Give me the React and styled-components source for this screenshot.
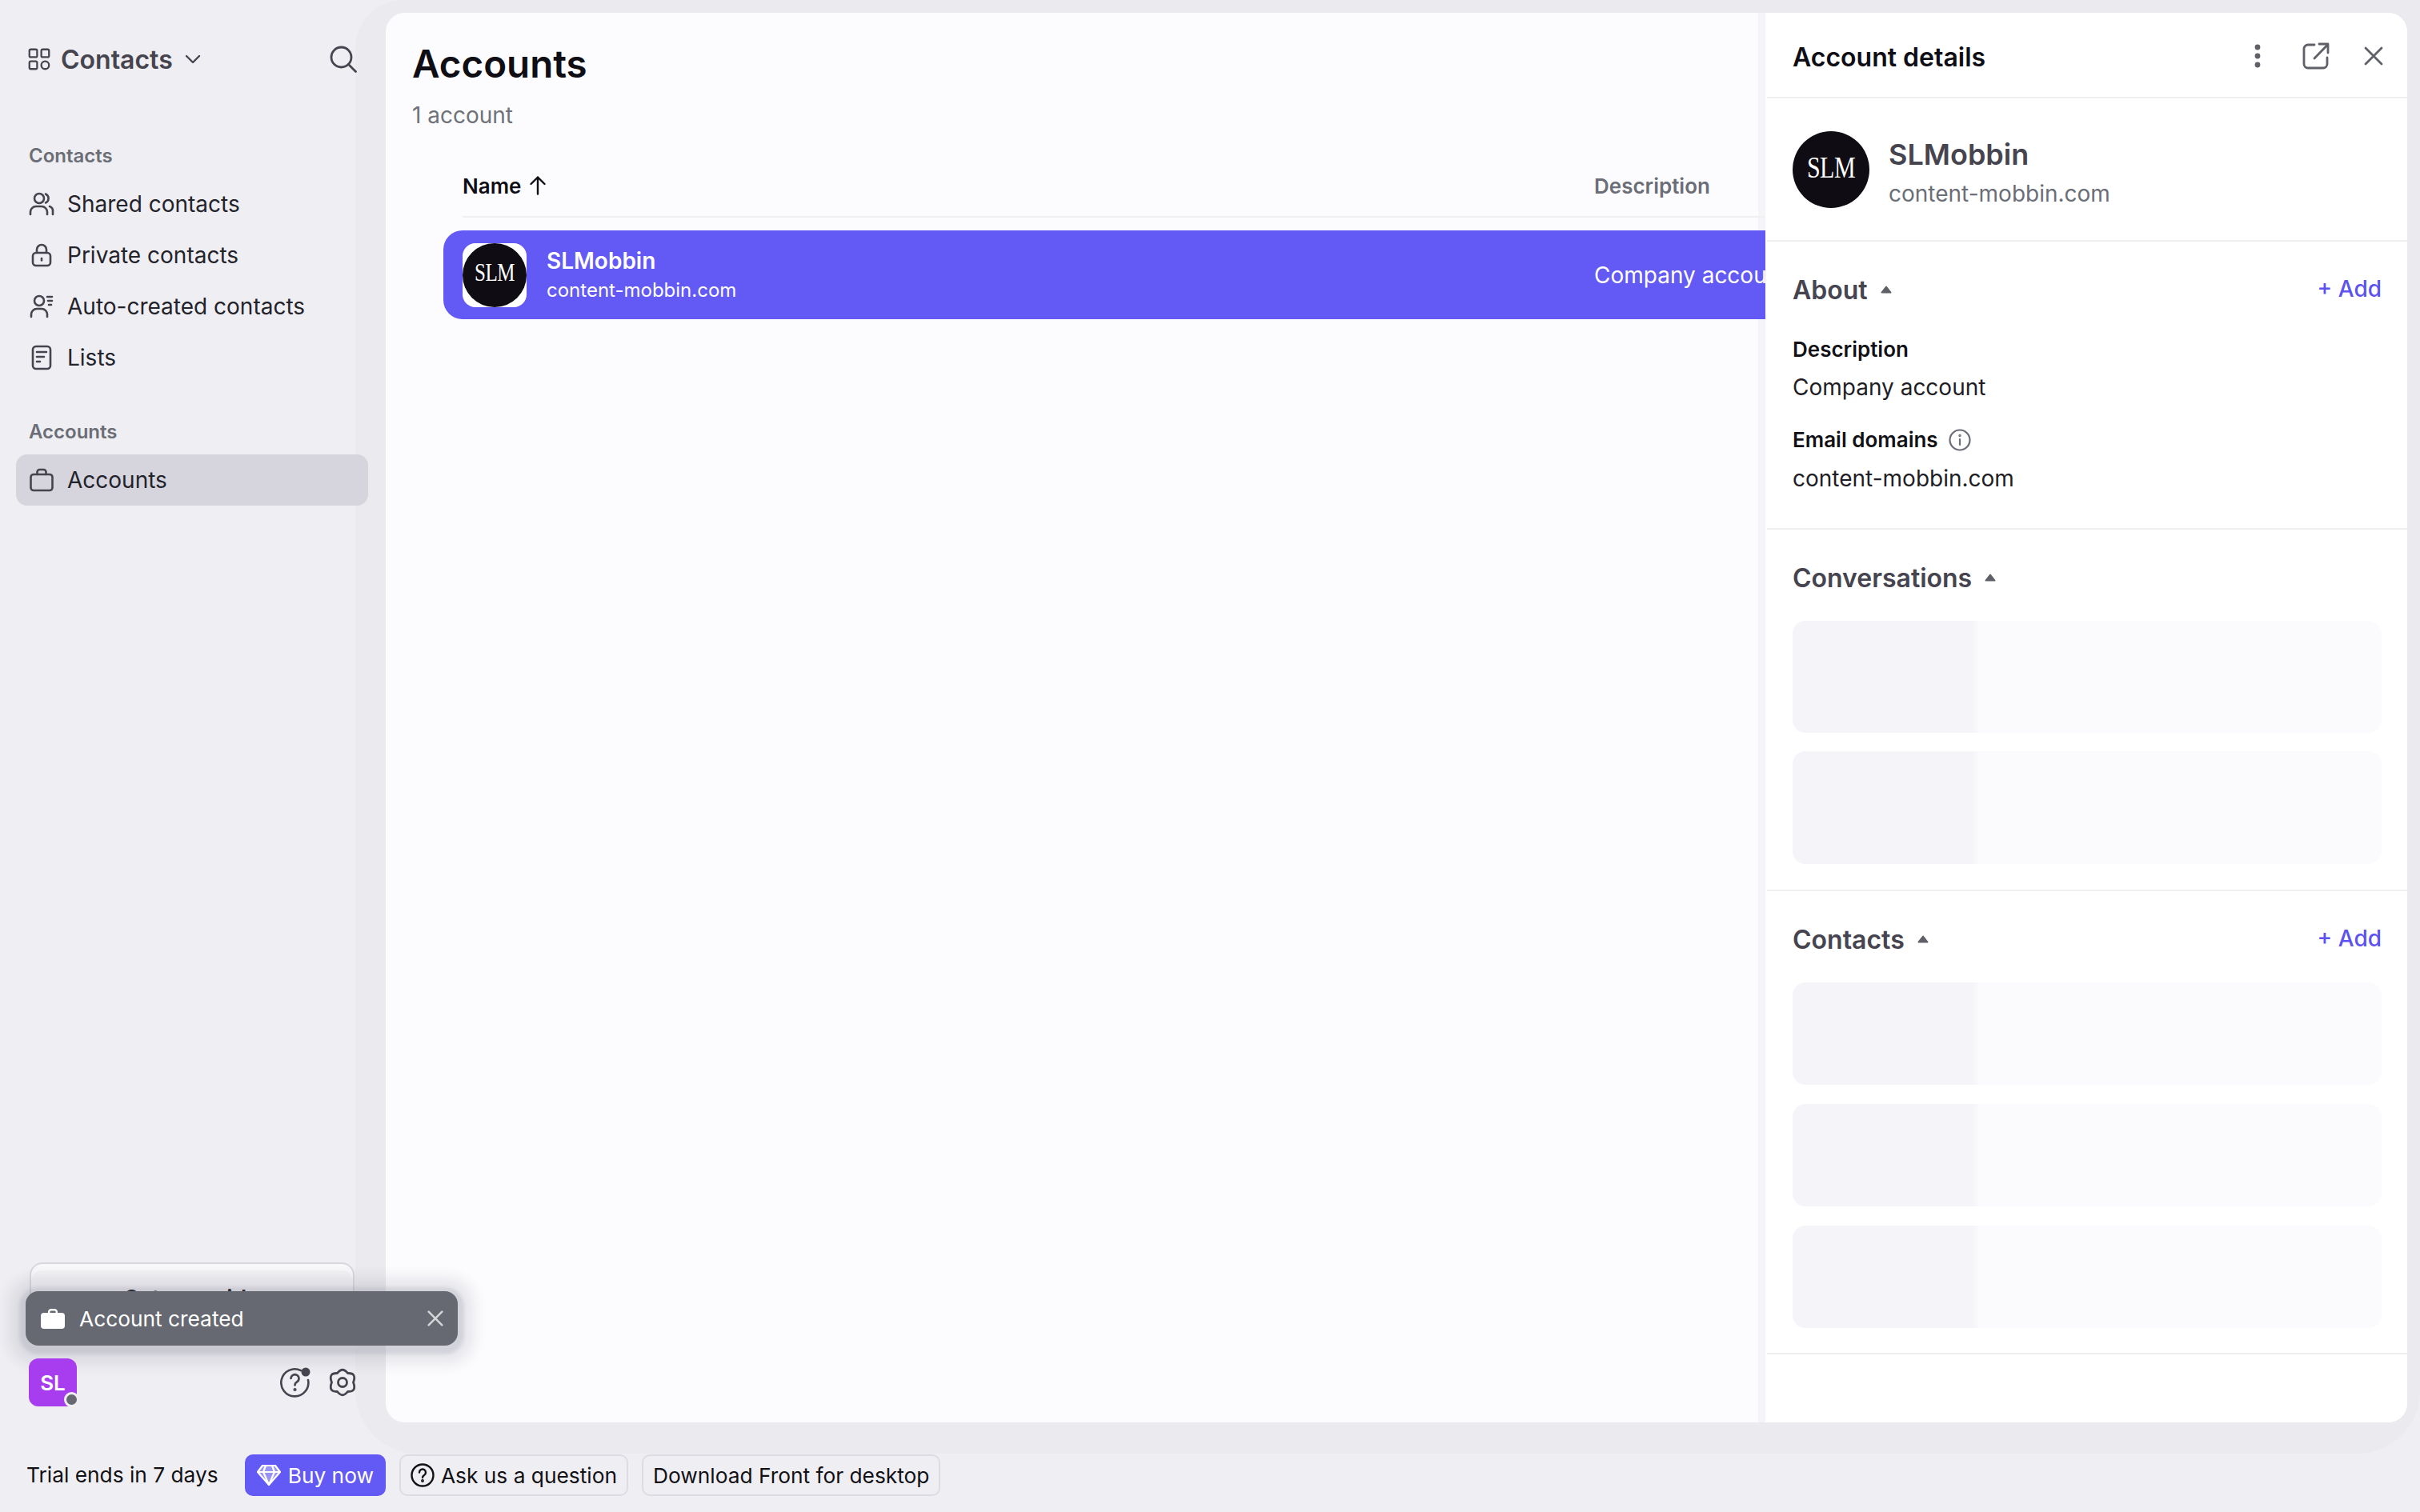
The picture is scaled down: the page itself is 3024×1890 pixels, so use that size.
import React from "react";
import styled, { createGlobalStyle } from "styled-components";

const Global = createGlobalStyle`
  html, body { margin: 0; padding: 0; background: #EFEEF2; }
  * { box-sizing: border-box; }
  body { font-family: "Inter", "Liberation Sans", sans-serif; color: #1F1E26; }
`;

const Page = styled.div`
  position: relative;
  width: 3024px;
  height: 1890px;
  overflow: hidden;
  display: flex;
  flex-direction: column;
  background: #EFEEF2;
`;
const Top = styled.div`
  display: flex;
  height: 1817px;
  flex: none;
`;
const Sidebar = styled.aside`
  position: relative;
  z-index: 2;
  width: 444px;
  flex: none;
  display: flex;
  flex-direction: column;
  padding: 50px 0 59px 0;
`;
const SideHead = styled.div`
  display: flex;
  align-items: center;
  height: 48px;
  padding-left: 35px;
  width: 446px;
  color: #45444F;
`;
const SideTitle = styled.span`
  font-size: 32px;
  font-weight: 600;
  margin-left: 13px;
  margin-right: 15px;
  color: #45444F;
`;
const SearchWrap = styled.span`
  margin-left: auto;
  display: flex;
`;
const GroupLabel = styled.div`
  font-size: 24px;
  font-weight: 600;
  line-height: 32px;
  color: #6B6E76;
  padding-left: 36px;
  margin-top: ${(p) => p.$top}px;
  margin-bottom: 12px;
`;
const NavItem = styled.div`
  width: 440px;
  height: 64px;
  margin-left: 20px;
  padding-left: 16px;
  display: flex;
  align-items: center;
  gap: 16px;
  font-size: 28px;
  color: #23232B;
  border-radius: 14px;
  flex: none;
  background: ${(p) => (p.$active ? "#D6D5DD" : "transparent")};
  svg { flex: none; color: #45444F; }
`;
const SetupCard = styled.div`
  margin-top: auto;
  margin-left: 37px;
  width: 406px;
  height: 84px;
  margin-bottom: 36px;
  border: 2px solid #D8D7DD;
  border-radius: 16px;
  background: #F2F1F4;
  box-shadow: inset 0 8px 0 #F8F8FA;
  font-size: 28px;
  font-weight: 600;
  text-align: center;
  padding-top: 26px;
  color: #111116;
`;
const BottomBar = styled.div`
  position: relative;
  z-index: 6;
  display: flex;
  align-items: center;
  height: 60px;
  margin-left: 36px;
  width: 410px;
`;
const UserTile = styled.div`
  position: relative;
  width: 60px;
  height: 60px;
  border-radius: 12px;
  background: #A83DF0;
  color: #fff;
  font-size: 26px;
  font-weight: 600;
  display: flex;
  align-items: center;
  justify-content: center;
`;
const StatusDot = styled.span`
  position: absolute;
  right: -3px;
  bottom: -1px;
  width: 19px;
  height: 19px;
  border-radius: 50%;
  border: 3px solid #EFEEF2;
  background: #666971;
`;
const BarIcons = styled.div`
  margin-left: auto;
  display: flex;
  align-items: center;
  gap: 22px;
  color: #45444F;
`;

const Shell = styled.div`
  flex: 1;
  min-width: 0;
  background: #EBEAEE;
  border-radius: 60px 0 78px 78px;
  padding: 16px 16px 39px 38px;
  display: flex;
`;
const Card = styled.div`
  flex: 1;
  display: flex;
  border-radius: 24px;
  overflow: hidden;
  background: #FCFCFE;
`;
const ListPane = styled.main`
  position: relative;
  z-index: 1;
  width: 1724px;
  flex: none;
  overflow: hidden;
  padding-top: 33px;
`;
const PageTitle = styled.h1`
  margin: 0 0 0 33px;
  font-size: 47.5px;
  line-height: 62px;
  font-weight: 600;
  color: #0F0E14;
`;
const Count = styled.div`
  margin: 15px 0 0 33px;
  font-size: 28px;
  line-height: 36px;
  color: #6F7279;
`;
const HeadRow = styled.div`
  margin: 32px 0 0 96px;
  height: 78px;
  border-bottom: 2px solid #F0F0F2;
  display: flex;
  align-items: center;
`;
const HeadCell = styled.div`
  width: ${(p) => p.$w}px;
  display: flex;
  align-items: center;
  gap: 11px;
  font-size: 26px;
  font-weight: 600;
  color: ${(p) => p.$color};
`;
const SelectedRow = styled.div`
  margin: 16px -240px 0 72px;
  height: 111px;
  border-radius: 24px;
  padding-left: 24px;
  background: #6359F5;
  color: #fff;
  display: flex;
  align-items: center;
`;
const NameCell = styled.div`
  width: 1414px;
  display: flex;
  align-items: center;
  gap: 25px;
`;
const LogoTile = styled.div`
  width: 80px;
  height: 80px;
  border-radius: 16px;
  background: #fff;
`;
const LogoCircle = styled.div`
  width: ${(p) => p.$size}px;
  height: ${(p) => p.$size}px;
  border-radius: 50%;
  background: #0F0D13;
  display: flex;
  align-items: center;
  justify-content: center;
  flex: none;
`;
const LogoMark = styled.span`
  font-family: "Liberation Serif", serif;
  color: #fff;
  font-size: ${(p) => p.$font}px;
  line-height: 1;
  letter-spacing: -0.5px;
  margin-bottom: 6px;
  transform: scaleY(1.25);
`;
const RowName = styled.div`
  font-size: 28px;
  font-weight: 600;
  line-height: 36px;
`;
const RowSub = styled.div`
  font-size: 24px;
  line-height: 34px;
  margin-top: 2px;
`;
const RowDesc = styled.div`
  font-size: 28px;
  white-space: nowrap;
`;

const Details = styled.aside`
  position: relative;
  flex: 1;
  background: #fff;
  box-shadow: -9px 0 0 #F5F5F9;
`;
const DetailHead = styled.div`
  height: 107px;
  margin-left: 2px;
  padding: 0 30px 0 32px;
  border-bottom: 2px solid #EFEFF2;
  display: flex;
  align-items: center;
`;
const DetailTitle = styled.div`
  font-size: 32px;
  font-weight: 600;
  color: #0F0E14;
  margin-top: 5px;
`;
const HeadIcons = styled.div`
  margin-left: auto;
  display: flex;
  align-items: center;
  color: #5F6068;
  gap: 43px;
  margin-top: 2px;
`;
const DotsWrap = styled.span`
  display: flex;
  margin-right: 7px;
`;
const Section = styled.section`
  margin-left: 2px;
  padding: ${(p) => p.$top}px 32px ${(p) => p.$bottom}px 32px;
  border-bottom: 2px solid #EFEFF2;
`;
const Profile = styled(Section)`
  display: flex;
  align-items: flex-start;
  gap: 24px;
`;
const ProfileText = styled.div`
  margin-top: 6px;
`;
const ProfileName = styled.div`
  font-size: 36px;
  font-weight: 600;
  line-height: 46px;
  color: #45444F;
`;
const ProfileSub = styled.div`
  font-size: 28px;
  line-height: 36px;
  margin-top: 8px;
  color: #6B6E76;
`;
const SectionHead = styled.div`
  height: 40px;
  display: flex;
  align-items: center;
`;
const SectionTitle = styled.div`
  font-size: 32px;
  font-weight: 600;
  color: #45444F;
  margin-right: 16px;
`;
const AddLink = styled.div`
  margin-left: auto;
  font-size: 28px;
  font-weight: 500;
  color: #5B52F0;
  margin-top: -3px;
`;
const FieldLabel = styled.div`
  display: flex;
  align-items: center;
  gap: 13px;
  font-size: 26px;
  font-weight: 600;
  line-height: 34px;
  color: #111116;
  margin-top: ${(p) => p.$top}px;
  svg { color: #6B6E76; }
`;
const FieldValue = styled.div`
  font-size: 28px;
  line-height: 36px;
  margin-top: ${(p) => p.$top}px;
  color: #1F1E26;
`;
const Skeletons = styled.div`
  margin-top: ${(p) => p.$top}px;
  display: flex;
  flex-direction: column;
  gap: ${(p) => p.$gap}px;
`;
const Skeleton = styled.div`
  height: ${(p) => p.$h}px;
  border-radius: 16px;
  background: linear-gradient(90deg, #F5F5F9 0, #F5F5F9 224px, #FBFBFD 234px, #FBFBFD 100%);
`;

const Footer = styled.footer`
  flex: 1;
  display: flex;
  align-items: flex-start;
  padding: 1px 0 0 33px;
`;
const TrialText = styled.div`
  font-size: 26.3px;
  line-height: 52px;
  margin-right: 33px;
  color: #111116;
`;
const FootButton = styled.div`
  height: 52px;
  display: flex;
  align-items: center;
  gap: ${(p) => (p.$primary ? 9 : 8)}px;
  padding: 0 ${(p) => (p.$primary ? 13 : 12)}px;
  margin-right: 17px;
  font-size: 26.3px;
  border-radius: 10px;
  color: ${(p) => (p.$primary ? "#fff" : "#111116")};
  background: ${(p) => (p.$primary ? "#6359F5" : "transparent")};
  border: 2px solid ${(p) => (p.$primary ? "#6359F5" : "#DDDCE2")};
`;

const Toast = styled.div`
  position: absolute;
  left: 32px;
  top: 1614px;
  z-index: 5;
  width: 540px;
  height: 68px;
  border-radius: 16px;
  background: #666971;
  color: #fff;
  display: flex;
  align-items: center;
  padding-left: 19px;
  font-size: 26.3px;
  gap: 18px;
  box-shadow: 0 3px 4px 8px rgba(120, 118, 140, 0.2), 0 3px 6px 18px rgba(120, 118, 140, 0.07),
    0 3px 8px 28px rgba(120, 118, 140, 0.06);
`;
const ToastClose = styled.span`
  margin-left: auto;
  margin-right: 18px;
  display: flex;
  color: #D6D6DA;
`;

const Stroke = ({ size = 32, w = 2.6, vb = 32, children, style }) => (
  <svg width={size} height={size} viewBox={`0 0 ${vb} ${vb}`} fill="none" stroke="currentColor" strokeWidth={w} strokeLinecap="round" strokeLinejoin="round" style={style}>
    {children}
  </svg>
);

const GridIcon = () => (
  <Stroke size={28}>
    <rect x="2" y="2" width="11" height="11" rx="2" />
    <rect x="19" y="2" width="11" height="11" rx="2" />
    <rect x="2" y="19" width="11" height="11" rx="2" />
    <circle cx="24.5" cy="24.5" r="5.5" />
  </Stroke>
);
const ChevronIcon = () => (
  <Stroke size={20} vb={20} w={2.4}><path d="M2 6l8 8 8-8" /></Stroke>
);
const SearchIcon = () => (
  <Stroke size={34} vb={34} w={2.8}>
    <circle cx="14.5" cy="14.5" r="12.5" />
    <path d="M23.5 23.5L32.5 32.5" />
  </Stroke>
);
const SharedIcon = () => (
  <Stroke>
    <circle cx="13" cy="9" r="6" />
    <path d="M2 29v-3a7 7 0 0 1 7-7h7a7 7 0 0 1 7 7v3" />
    <path d="M21 3.5a6 6 0 0 1 0 11" />
    <path d="M26 19a6 6 0 0 1 4 6v4" />
  </Stroke>
);
const LockIcon = () => (
  <Stroke>
    <rect x="5" y="13" width="22" height="16" rx="4" />
    <path d="M10 13V9a6 6 0 0 1 12 0v4" />
    <path d="M16 20v2.5" />
  </Stroke>
);
const AutoIcon = () => (
  <Stroke>
    <circle cx="13" cy="9" r="6" />
    <path d="M3 29v-3a7 7 0 0 1 7-7h6a7 7 0 0 1 7 7v3" />
    <path d="M23 4h6M24 9h5M25 14h3" />
  </Stroke>
);
const ListIcon = () => (
  <Stroke>
    <rect x="5" y="2" width="22" height="28" rx="4" />
    <path d="M10 9h12M10 15h9M10 21h4" />
  </Stroke>
);
const BagIcon = () => (
  <Stroke>
    <rect x="2.5" y="9" width="27" height="20" rx="3.5" />
    <path d="M10.5 9V6a3 3 0 0 1 3-3h5a3 3 0 0 1 3 3v3" />
  </Stroke>
);
const ArrowUp = () => (
  <svg width="20" height="24" viewBox="0 0 20 24" fill="none" stroke="#0F0E14" strokeWidth="2.4" strokeLinecap="round" strokeLinejoin="round">
    <path d="M10 22.5V1.5M1.5 10L10 1.5 18.5 10" />
  </svg>
);
const DotsIcon = () => (
  <svg width="12" height="32" viewBox="0 0 12 32" fill="currentColor">
    <circle cx="6" cy="5" r="3.4" /><circle cx="6" cy="16" r="3.4" /><circle cx="6" cy="27" r="3.4" />
  </svg>
);
const ExternalIcon = () => (
  <Stroke size={34} vb={34} w={2.8}>
    <path d="M15 3H7a5 5 0 0 0-5 5v19a5 5 0 0 0 5 5h19a5 5 0 0 0 5-5v-8" />
    <path d="M15 20L32 2.5M21 2h11v11" />
  </Stroke>
);
const CloseIcon = ({ size = 24, w = 2.8 }) => (
  <Stroke size={size} vb={24} w={w}><path d="M2 2l20 20M22 2L2 22" /></Stroke>
);
const Caret = () => (
  <svg width="14" height="10" viewBox="0 0 14 10" fill="#5F6068" stroke="#5F6068" strokeWidth="2" strokeLinejoin="round">
    <path d="M7 1.5L12.5 8.5H1.5z" />
  </svg>
);
const InfoIcon = () => (
  <Stroke size={28} vb={28} w={2.2}>
    <circle cx="14" cy="14" r="12.5" />
    <path d="M14 13v7" />
    <circle cx="14" cy="8.5" r="0.6" fill="currentColor" />
  </Stroke>
);
const HelpBadgeIcon = () => (
  <svg width="38" height="38" viewBox="0 0 38 38" fill="none" stroke="currentColor" strokeWidth="2.6" strokeLinecap="round">
    <path d="M26 4.2A17 17 0 1 0 35 16" />
    <path d="M13.5 14a5 5 0 1 1 7.6 4.4c-1.6 1-2.6 2-2.6 4" />
    <circle cx="18.5" cy="28" r="0.8" fill="currentColor" />
    <circle cx="32" cy="6" r="5.5" fill="currentColor" stroke="none" />
  </svg>
);
const GearIcon = () => (
  <svg width="36" height="38" viewBox="0 0 36 38" fill="none" stroke="currentColor" strokeWidth="2.8" strokeLinejoin="round">
    <path d="M11.5 7.5Q18 -1 24.5 7.5Q36 7 31.5 19Q36 31 24.5 30.5Q18 39 11.5 30.5Q0 31 4.5 19Q0 7 11.5 7.5Z" />
    <circle cx="18" cy="19" r="5.5" />
  </svg>
);
const FilledBag = () => (
  <svg width="30" height="26" viewBox="0 0 30 26" fill="#fff">
    <path d="M9 6V4.5A4 4 0 0 1 13 1h4a4 4 0 0 1 4 3.5V6h-2.4V4.8c0-.8-.7-1.4-1.6-1.4h-4c-.9 0-1.6.6-1.6 1.4V6z" />
    <rect x="0" y="6" width="30" height="20" rx="4" />
  </svg>
);
const GemIcon = () => (
  <svg width="30" height="28" viewBox="0 0 30 28" fill="none" stroke="#fff" strokeWidth="2.2" strokeLinejoin="round">
    <path d="M7 2h16l6 8-14 16L1 10z" fill="rgba(255,255,255,.35)" />
    <path d="M1 10h28M11 2l-3 8 7 16 7-16-3-8" />
  </svg>
);
const QuestionIcon = () => (
  <svg width="30" height="30" viewBox="0 0 30 30" fill="none" stroke="#111116" strokeWidth="2.4" strokeLinecap="round">
    <circle cx="15" cy="15" r="13.5" />
    <path d="M11 11.5a4 4 0 1 1 6 3.5c-1.3.8-2 1.6-2 3" />
    <circle cx="15" cy="22" r="0.7" fill="#111116" />
  </svg>
);

const navItems = [
  ["Shared contacts", <SharedIcon key="a" />],
  ["Private contacts", <LockIcon key="b" />],
  ["Auto-created contacts", <AutoIcon key="c" />],
  ["Lists", <ListIcon key="d" />],
];

export default function App() {
  return (
    <Page>
      <Global />
      <Top>
        <Sidebar>
          <SideHead>
            <GridIcon />
            <SideTitle>Contacts</SideTitle>
            <ChevronIcon />
            <SearchWrap><SearchIcon /></SearchWrap>
          </SideHead>
          <GroupLabel $top={81}>Contacts</GroupLabel>
          {navItems.map(([label, icon]) => (
            <NavItem key={label}>{icon}{label}</NavItem>
          ))}
          <GroupLabel $top={45}>Accounts</GroupLabel>
          <NavItem $active><BagIcon />Accounts</NavItem>
          <SetupCard>Set up guide</SetupCard>
          <Toast>
            <FilledBag />
            Account created
            <ToastClose><CloseIcon size={20} w={3} /></ToastClose>
          </Toast>
          <BottomBar>
            <UserTile>SL<StatusDot /></UserTile>
            <BarIcons><HelpBadgeIcon /><GearIcon /></BarIcons>
          </BottomBar>
        </Sidebar>
        <Shell>
          <Card>
            <ListPane>
              <PageTitle>Accounts</PageTitle>
              <Count>1 account</Count>
              <HeadRow>
                <HeadCell $w={1414} $color="#0F0E14">Name <ArrowUp /></HeadCell>
                <HeadCell $w={200} $color="#6B6E76">Description</HeadCell>
              </HeadRow>
              <SelectedRow>
                <NameCell>
                  <LogoTile>
                    <LogoCircle $size={80}><LogoMark $font={25}>SLM</LogoMark></LogoCircle>
                  </LogoTile>
                  <div>
                    <RowName>SLMobbin</RowName>
                    <RowSub>content-mobbin.com</RowSub>
                  </div>
                </NameCell>
                <RowDesc>Company account</RowDesc>
              </SelectedRow>
            </ListPane>
            <Details>
              <DetailHead>
                <DetailTitle>Account details</DetailTitle>
                <HeadIcons>
                  <DotsWrap><DotsIcon /></DotsWrap>
                  <ExternalIcon />
                  <CloseIcon />
                </HeadIcons>
              </DetailHead>
              <Profile $top={41} $bottom={40}>
                <LogoCircle $size={96}><LogoMark $font={30}>SLM</LogoMark></LogoCircle>
                <ProfileText>
                  <ProfileName>SLMobbin</ProfileName>
                  <ProfileSub>content-mobbin.com</ProfileSub>
                </ProfileText>
              </Profile>
              <Section $top={40} $bottom={44}>
                <SectionHead>
                  <SectionTitle>About</SectionTitle><Caret />
                  <AddLink>+ Add</AddLink>
                </SectionHead>
                <FieldLabel $top={38}>Description</FieldLabel>
                <FieldValue $top={12}>Company account</FieldValue>
                <FieldLabel $top={31}>Email domains <InfoIcon /></FieldLabel>
                <FieldValue $top={13}>content-mobbin.com</FieldValue>
              </Section>
              <Section $top={40} $bottom={32}>
                <SectionHead>
                  <SectionTitle>Conversations</SectionTitle><Caret />
                </SectionHead>
                <Skeletons $top={34} $gap={23}>
                  <Skeleton $h={140} />
                  <Skeleton $h={141} />
                </Skeletons>
              </Section>
              <Section $top={40} $bottom={31}>
                <SectionHead>
                  <SectionTitle>Contacts</SectionTitle><Caret />
                  <AddLink>+ Add</AddLink>
                </SectionHead>
                <Skeletons $top={34} $gap={24}>
                  <Skeleton $h={128} />
                  <Skeleton $h={128} />
                  <Skeleton $h={128} />
                </Skeletons>
              </Section>
            </Details>
          </Card>
        </Shell>
      </Top>
      <Footer>
        <TrialText>Trial ends in 7 days</TrialText>
        <FootButton $primary><GemIcon />Buy now</FootButton>
        <FootButton><QuestionIcon />Ask us a question</FootButton>
        <FootButton>Download Front for desktop</FootButton>
      </Footer>
    </Page>
  );
}
